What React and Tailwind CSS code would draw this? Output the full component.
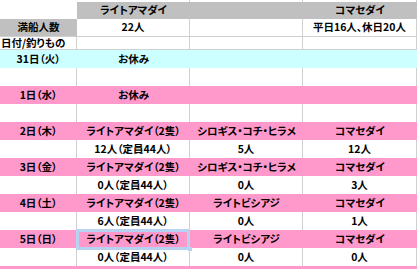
import React from "react";

const cols = "grid grid-cols-[77px_113px_113px_114px]";
const line = "border-r border-[#d0d0d0]";

const days = [
  { day: "31日（火）", bg: "bg-[#ccffff]", off: true },
  { day: "1日（水）", bg: "bg-[#ff99cc]", off: true },
  {
    day: "2日（木）",
    boats: ["ライトアマダイ（2隻）", "シロギス・コチ・ヒラメ", "コマセダイ"],
    counts: ["12人（定員44人）", "5人", "12人"],
  },
  {
    day: "3日（金）",
    boats: ["ライトアマダイ（2隻）", "シロギス・コチ・ヒラメ", "コマセダイ"],
    counts: ["0人（定員44人）", "0人", "3人"],
  },
  {
    day: "4日（土）",
    boats: ["ライトアマダイ（2隻）", "ライトビシアジ", "コマセダイ"],
    counts: ["6人（定員44人）", "0人", "1人"],
  },
  {
    day: "5日（日）",
    boats: ["ライトアマダイ（2隻）", "ライトビシアジ", "コマセダイ"],
    counts: ["0人（定員44人）", "0人", "0人"],
    selected: true,
  },
];

const WhiteRow = ({ cells = ["", "", "", ""], h = "h-[18px]" }) => (
  <div className={`${cols} ${h} bg-white`}>
    {cells.map((c, i) => (
      <div key={i} className={`${line} flex items-center justify-center`}>
        {c}
      </div>
    ))}
  </div>
);

export default function App() {
  return (
    <div
      className="w-[417px] h-[269px] overflow-hidden bg-white text-[10.5px] font-semibold text-black leading-none [font-feature-settings:'palt']"
      style={{ fontFamily: '"Noto Sans CJK JP", "Noto Sans", sans-serif' }}
    >
      {/* header */}
      <div className={`${cols} h-[2px]`}>
        <div />
        <div className={line} />
        <div className={line} />
        <div className={line} />
      </div>
      <div className={`${cols} h-[17px]`}>
        <div className="bg-white" />
        <div className="bg-[#c0c0c0] flex items-center justify-center">ライトアマダイ</div>
        <div className="bg-[#c0c0c0]" />
        <div className="bg-[#c0c0c0] flex items-center justify-center">コマセダイ</div>
      </div>
      <div className={`${cols} h-[18px] border-b border-[#d0d0d0]`}>
        <div className="bg-[#c0c0c0] flex items-center justify-center">満船人数</div>
        <div className={`${line} flex items-center justify-center`}>22人</div>
        <div className={line} />
        <div className={`${line} flex items-center justify-center`}>平日16人、休日20人</div>
      </div>
      <div className={`${cols} h-[13px] border-b border-[#d0d0d0]`}>
        <div className={`${line} flex items-center pl-[1px]`}>日付/釣りもの</div>
        <div className={line} />
        <div className={line} />
        <div className={line} />
      </div>

      {days.map((d, i) => (
        <React.Fragment key={i}>
          <div className={`${cols} h-[18px] ${d.bg || "bg-[#ff99cc]"}`}>
            <div className="flex items-center justify-center">{d.day}</div>
            {d.off ? (
              <div className="flex items-center justify-center">お休み</div>
            ) : (
              d.boats.map((b, j) => (
                <div key={j} className="relative flex items-center justify-center">
                  {b}
                  {d.selected && j === 0 && (
                    <>
                      <div className="absolute -left-[1px] -top-[1px] w-[114px] h-[21px] border-[3px] border-[#b8d3f2]" />
                      <div className="absolute right-[-2px] bottom-[-3px] w-[4px] h-[4px] bg-[#b8d3f2]" />
                    </>
                  )}
                </div>
              ))
            )}
          </div>
          <WhiteRow cells={d.off ? ["", "", "", ""] : ["", ...d.counts]} />
        </React.Fragment>
      ))}
      <div className="h-[4px] bg-[#ff99cc]" />
    </div>
  );
}
